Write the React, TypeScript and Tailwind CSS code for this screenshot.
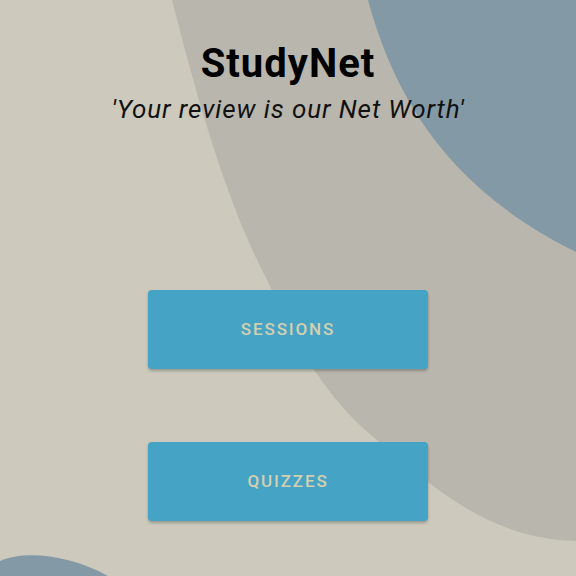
import React from 'react';

function Backdrop() {
  return (
    <svg className="absolute inset-0 h-full w-full" viewBox="0 0 576 576" preserveAspectRatio="none">
      <rect width="576" height="576" fill="#cdcabd" />
      <path
        d="M172 0 C 195 90, 225 200, 267 280 C 290 330, 320 395, 377 440 C 430 485, 490 540, 576 541 L 576 0 Z"
        fill="#b9b7ad"
      />
      <path d="M368 0 C 395 100, 450 190, 576 252 L 576 0 Z" fill="#8499a6" />
      <path d="M0 561 C 25 550, 70 555, 108 576 L 0 576 Z" fill="#8499a6" />
    </svg>
  );
}

function MenuButton({ label }: { label: string }) {
  return (
    <button className="flex h-[79px] w-[280px] items-center justify-center rounded-[4px] bg-[#45a3c6] text-[17px] font-medium tracking-[0.11em] text-[#d4d0af] shadow-[0_2px_3px_rgba(0,0,0,0.25)]">
      {label}
    </button>
  );
}

export default function App() {
  return (
    <div
      className="relative h-[576px] w-[576px] overflow-hidden"
      style={{ fontFamily: 'Roboto, "Noto Sans", sans-serif' }}
    >
      <Backdrop />
      <div className="relative flex flex-col items-center pt-[41px]">
        <h1 className="text-[40px] leading-[46px] font-bold tracking-[1px] text-black">StudyNet</h1>
        <p className="mt-[7px] text-[26px] leading-[30px] italic tracking-[0.9px] text-[#111]">
          'Your review is our Net Worth'
        </p>
        <div className="mt-[166px] flex flex-col gap-[73px]">
          <MenuButton label="SESSIONS" />
          <MenuButton label="QUIZZES" />
        </div>
      </div>
    </div>
  );
}
